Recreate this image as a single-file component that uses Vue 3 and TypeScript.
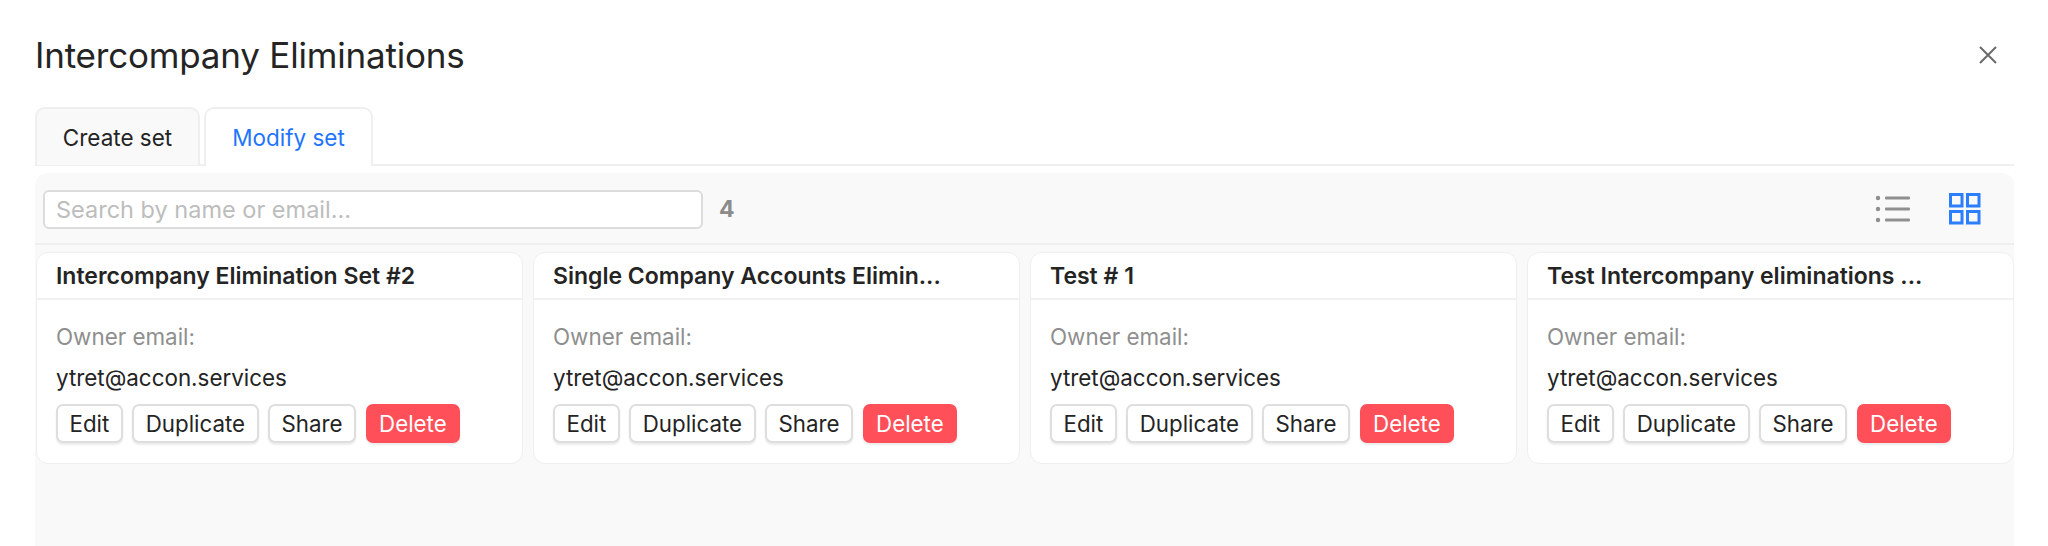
<script setup lang="ts">
interface SetItem { title: string; email: string }
const sets: SetItem[] = [
  { title: 'Intercompany Elimination Set #2', email: 'ytret@accon.services' },
  { title: 'Single Company Accounts Elimin...', email: 'ytret@accon.services' },
  { title: 'Test # 1', email: 'ytret@accon.services' },
  { title: 'Test Intercompany eliminations ...', email: 'ytret@accon.services' },
]
</script>

<template>
  <div class="page">
    <header class="head">
      <h1>Intercompany Eliminations</h1>
      <button class="close" aria-label="Close">
        <svg width="20" height="20" viewBox="0 0 20 20"><path d="M2 2 L18 18 M18 2 L2 18" stroke="#6b6b6b" stroke-width="2" fill="none" /></svg>
      </button>
    </header>
    <nav class="tabs">
      <div class="tab">Create set</div>
      <div class="tab active">Modify set</div>
    </nav>
    <section class="panel">
      <div class="toolbar">
        <input class="search" placeholder="Search by name or email..." />
        <span class="count">4</span>
        <div class="views">
          <svg width="36" height="30" viewBox="0 0 36 30">
            <g fill="#8f8f8f">
              <circle cx="3" cy="4" r="2.2" /><circle cx="3" cy="15" r="2.2" /><circle cx="3" cy="26" r="2.2" />
              <rect x="10" y="2.5" width="25" height="3" rx="1" /><rect x="10" y="13.5" width="25" height="3" rx="1" /><rect x="10" y="24.5" width="25" height="3" rx="1" />
            </g>
          </svg>
          <svg width="32" height="32" viewBox="0 0 32 32">
            <g fill="none" stroke="#2b7fff" stroke-width="3">
              <rect x="1.5" y="1.5" width="11.5" height="11.5" /><rect x="18.5" y="1.5" width="11.5" height="11.5" />
              <rect x="1.5" y="18.5" width="11.5" height="11.5" /><rect x="18.5" y="18.5" width="11.5" height="11.5" />
            </g>
          </svg>
        </div>
      </div>
      <div class="grid">
        <article v-for="s in sets" :key="s.title" class="card">
          <div class="card-title"><span>{{ s.title }}</span></div>
          <div class="card-body">
            <div class="label">Owner email:</div>
            <div class="email">{{ s.email }}</div>
            <div class="actions">
              <button class="btn">Edit</button>
              <button class="btn">Duplicate</button>
              <button class="btn">Share</button>
              <button class="btn danger">Delete</button>
            </div>
          </div>
        </article>
      </div>
    </section>
  </div>
</template>

<style>
html, body { margin: 0; background: #fff; }
</style>

<style scoped>
.page {
  box-sizing: border-box;
  width: 2048px;
  height: 546px;
  padding: 0 34px 0 35px;
  font-family: Inter, "Liberation Sans", sans-serif;
  color: #242424;
  overflow: hidden;
  display: flex;
  flex-direction: column;
}
.head {
  height: 107px;
  display: flex;
  align-items: center;
  justify-content: space-between;
  padding-top: 3px;
  box-sizing: border-box;
}
h1 { margin: 0; font-size: 35px; font-weight: 400; letter-spacing: -0.2px; }
.close { border: 0; background: none; padding: 0; margin-right: 16px; display: flex; }
.tabs {
  display: flex;
  gap: 4px;
  height: 59px;
  box-sizing: border-box;
  border-bottom: 2px solid #efefef;
}
.tab {
  width: 165px;
  box-sizing: border-box;
  height: 58px;
  border: 2px solid #efefef;
  border-bottom: 0;
  border-radius: 10px 10px 0 0;
  background: #f9f9f9;
  font-size: 22.5px;
  display: flex;
  align-items: center;
  justify-content: center;
}
.tab.active {
  width: 169px;
  height: 59px;
  background: #fff;
  color: #1f75fe;
}
.panel {
  flex: 1;
  margin-top: 7px;
  background: #f9f9f9;
  border-radius: 12px 12px 0 0;
}
.toolbar {
  height: 72px;
  box-sizing: border-box;
  border-bottom: 2px solid #efefef;
  display: flex;
  align-items: center;
  padding: 2px 33px 0 8px;
}
.search {
  box-sizing: border-box;
  width: 660px;
  height: 39px;
  border: 2px solid #dcdcdc;
  border-radius: 6px;
  background: #fff;
  padding: 0 11px;
  font: 400 23.5px Inter, "Liberation Sans", sans-serif;
  outline: none;
}
.search::placeholder { color: #bdbdbd; opacity: 1; }
.count { margin-left: 16px; font-size: 23px; font-weight: 700; color: #8c8c8c; }
.views { margin-left: auto; display: flex; align-items: center; gap: 38px; }
.grid {
  display: grid;
  grid-template-columns: repeat(4, 1fr);
  gap: 10px;
  padding: 7px 0 0 1px;
}
.card {
  background: #fff;
  border: 1px solid #efefef;
  border-radius: 12px;
  min-width: 0;
  height: 212px;
  box-sizing: border-box;
}
.card-title {
  height: 45px;
  padding: 0 19px;
  border-bottom: 2px solid #f1f1f1;
  font-size: 23px;
  font-weight: 600;
  display: flex;
  align-items: center;
}
.card-title span { white-space: nowrap; overflow: hidden; text-overflow: ellipsis; }
.card-body { padding: 24px 19px 0; }
.label { font-size: 22.4px; line-height: 26px; color: #8f8f8f; }
.email { font-size: 22.4px; line-height: 26px; margin-top: 15px; }
.actions { display: flex; gap: 9.5px; margin-top: 13px; }
.btn {
  height: 39px;
  box-sizing: border-box;
  padding: 0 11.5px;
  border: 2px solid #dedede;
  border-radius: 7px;
  background: #fff;
  color: #242424;
  font: 400 22.3px Inter, "Liberation Sans", sans-serif;
  box-shadow: 0 2px 2px rgba(0, 0, 0, 0.08);
}
.btn.danger { background: #ff5059; border-color: #ff5059; color: #fff; }
</style>
